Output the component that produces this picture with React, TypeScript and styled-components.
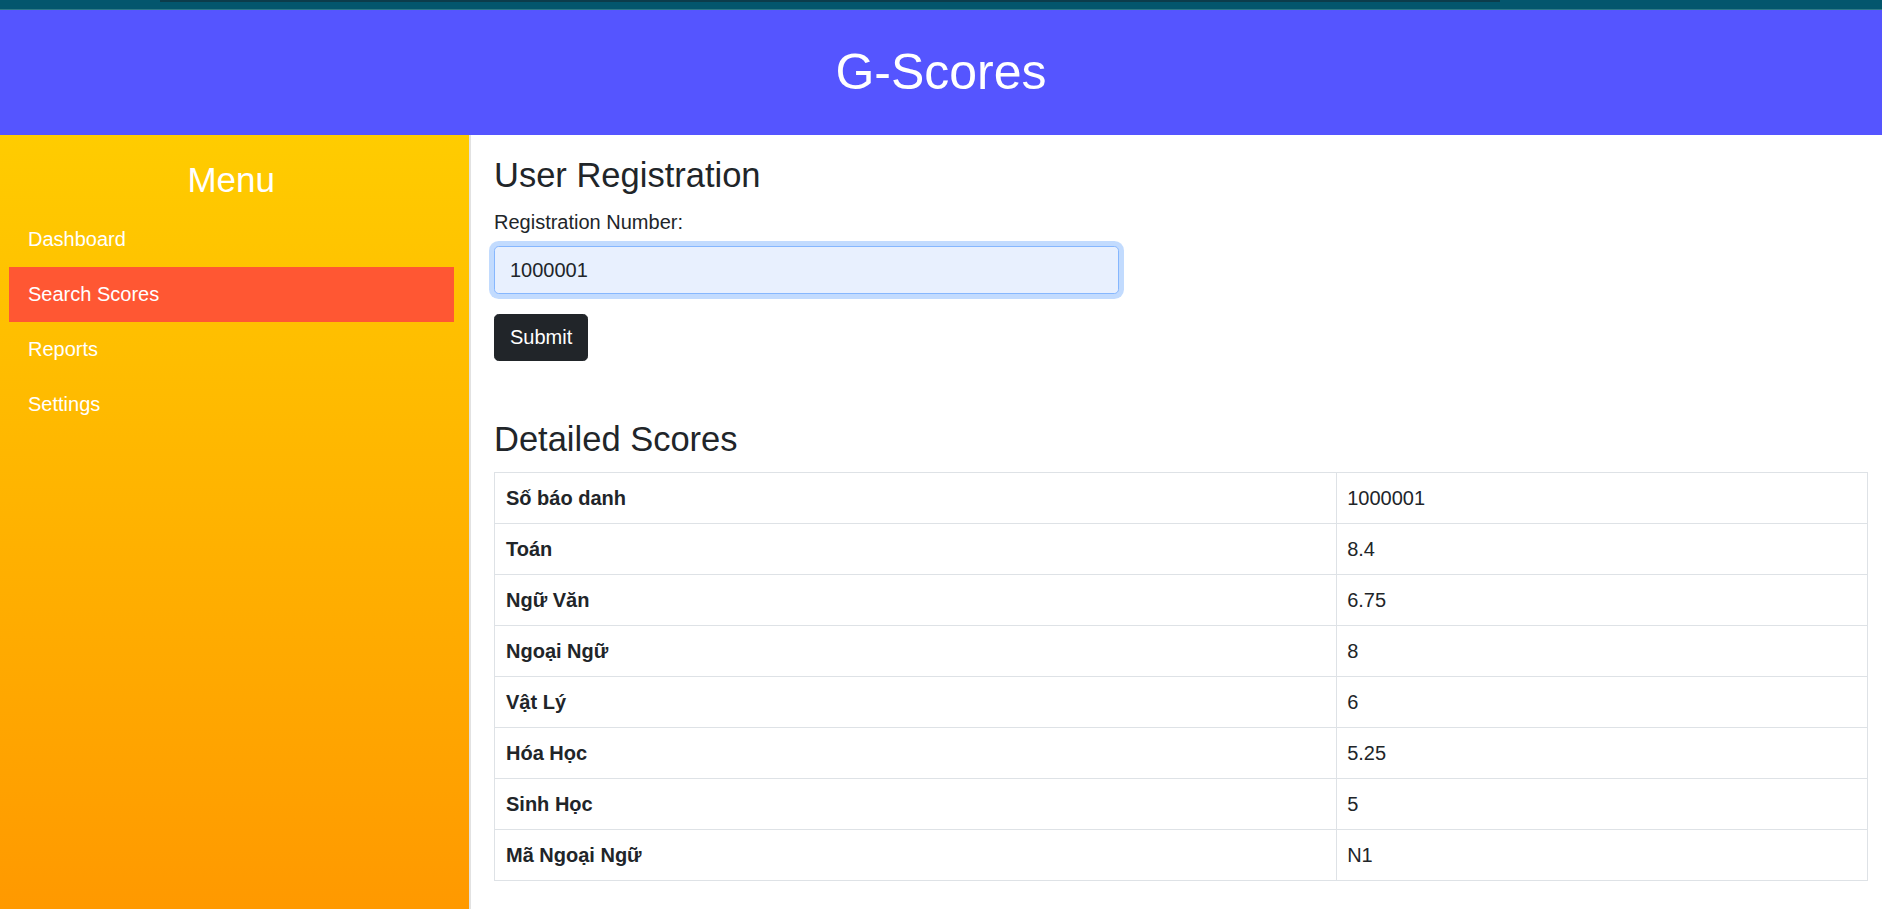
import styled, { createGlobalStyle } from 'styled-components';

const GlobalStyle = createGlobalStyle`
  * {
    box-sizing: border-box;
  }
  body {
    margin: 0;
    font-family: "Liberation Sans", Arial, sans-serif;
    font-size: 20px;
    line-height: 1.5;
    color: #212529;
    background: #fff;
  }
`;

const menuItems = ['Dashboard', 'Search Scores', 'Reports', 'Settings'];

const scores: [string, string][] = [
  ['Số báo danh', '1000001'],
  ['Toán', '8.4'],
  ['Ngữ Văn', '6.75'],
  ['Ngoại Ngữ', '8'],
  ['Vật Lý', '6'],
  ['Hóa Học', '5.25'],
  ['Sinh Học', '5'],
  ['Mã Ngoại Ngữ', 'N1'],
];

const App: React.FC = () => {
  return (
    <>
      <GlobalStyle />
      <TopStrip>
        <StripBar />
      </TopStrip>
      <Header>
        <Title>G-Scores</Title>
      </Header>
      <Body>
        <Sidebar>
          <MenuTitle>Menu</MenuTitle>
          <MenuList>
            {menuItems.map((item) => (
              <MenuItem key={item} isActive={item === 'Search Scores'}>
                {item}
              </MenuItem>
            ))}
          </MenuList>
        </Sidebar>
        <Main>
          <Heading>User Registration</Heading>
          <form onSubmit={(e) => e.preventDefault()}>
            <Label htmlFor="reg">Registration Number:</Label>
            <Input id="reg" defaultValue="1000001" isFocused />
            <SubmitButton type="submit">Submit</SubmitButton>
          </form>
          <Heading spaced>Detailed Scores</Heading>
          <ScoreTable>
            <tbody>
              {scores.map(([subject, value]) => (
                <tr key={subject}>
                  <SubjectCell>{subject}</SubjectCell>
                  <ValueCell>{value}</ValueCell>
                </tr>
              ))}
            </tbody>
          </ScoreTable>
        </Main>
      </Body>
    </>
  );
};

export default App;

const TopStrip = styled.div`
  height: 9.5px;
  background: #03566d;
  border-bottom: 1px solid #2f7a86;
  padding-left: 160px;
`;

const StripBar = styled.div`
  width: 1340px;
  height: 1.5px;
  background: #0c3c4b;
`;

const Header = styled.header`
  background: #5555ff;
  padding: 32px 0 33px;
  text-align: center;
`;

const Title = styled.h1`
  margin: 0;
  color: #fff;
  font-size: 50px;
  font-weight: 400;
  line-height: 1.2;
`;

const Body = styled.div`
  display: flex;
  min-height: calc(100vh - 135px);
`;

const Sidebar = styled.aside`
  flex: 0 0 25%;
  background: linear-gradient(#ffcc00, #ff9900);
  border-right: 2px solid #e2e2e2;
  padding: 24.5px 15px 0 9px;
`;

const MenuTitle = styled.h3`
  margin: 0 0 10.5px;
  color: #fff;
  font-size: 35px;
  font-weight: 400;
  line-height: 1.2;
  text-align: center;
`;

const MenuList = styled.ul`
  list-style: none;
  margin: 0;
  padding: 0;
`;

const MenuItem = styled.li<{ isActive?: boolean }>`
  padding: 12.5px 19px;
  font-size: 20px;
  line-height: 30px;
  color: #fff;
  background: ${({ isActive }) => (isActive ? '#ff5733' : 'transparent')};
  cursor: pointer;
`;

const Main = styled.main`
  flex: 1;
  padding: 20px 14px 20px 23.5px;
`;

const Heading = styled.h3<{ spaced?: boolean }>`
  margin: ${({ spaced }) => (spaced ? '58.5px' : '0')} 0 11px;
  font-size: 34.5px;
  font-weight: 400;
  line-height: 1.2;
`;

const Label = styled.label`
  display: block;
  margin-bottom: 9.5px;
  font-size: 20px;
  line-height: 30px;
`;

const Input = styled.input<{ isFocused?: boolean }>`
  display: block;
  width: 100%;
  max-width: 625px;
  height: 47.5px;
  padding: 7.5px 15px;
  margin-bottom: 20px;
  font-family: inherit;
  font-size: 20px;
  line-height: 30px;
  color: #212529;
  background: #e8f0fe;
  border: 1.25px solid ${({ isFocused }) => (isFocused ? '#86b7fe' : '#dee2e6')};
  border-radius: 4.7px;
  box-shadow: ${({ isFocused }) => (isFocused ? '0 0 0 5px rgba(13, 110, 253, 0.25)' : 'none')};
  outline: none;
`;

const SubmitButton = styled.button`
  display: inline-block;
  padding: 7.5px 15px;
  font-family: inherit;
  font-size: 20px;
  line-height: 30px;
  color: #fff;
  background: #212529;
  border: 1.25px solid #212529;
  border-radius: 4.7px;
  cursor: pointer;
`;

const ScoreTable = styled.table`
  width: 100%;
  border-collapse: collapse;
  border: 1.25px solid #dee2e6;
`;

const SubjectCell = styled.th`
  width: 61.3%;
  padding: 10px 11px;
  border: 1.25px solid #dee2e6;
  font-weight: 700;
  text-align: left;
  line-height: 30px;
`;

const ValueCell = styled.td`
  padding: 10px 10.5px;
  border: 1.25px solid #dee2e6;
  line-height: 30px;
`;
